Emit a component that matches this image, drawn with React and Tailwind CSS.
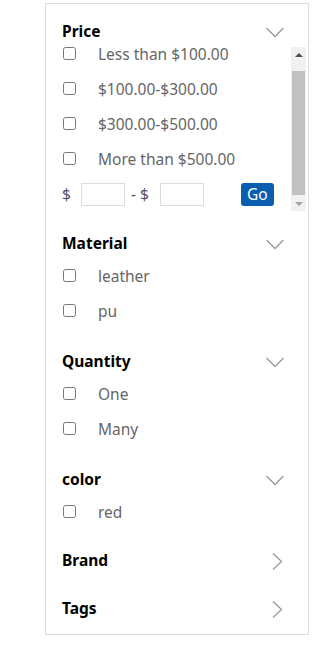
import React from "react"

function ChevronDown() {
  return (
    <svg width="18" height="11" viewBox="0 0 18 11" fill="none">
      <polyline points="0.5,1 9,9.5 17.5,1" stroke="#9a9a9a" strokeWidth="1.3" />
    </svg>
  )
}

function ChevronRight() {
  return (
    <svg width="11" height="17" viewBox="0 0 11 17" fill="none">
      <polyline points="1,0.5 9.5,8.5 1,16.5" stroke="#9a9a9a" strokeWidth="1.3" />
    </svg>
  )
}

function Option({ label }) {
  return (
    <label className="flex h-[35px] items-center pl-[17px]">
      <input type="checkbox" className="m-0 mb-[3px] h-[13px] w-[13px]" />
      <span className="ml-[22px] text-[15.5px] text-[#666]">{label}</span>
    </label>
  )
}

function Header({ title, open = true }) {
  return (
    <div className="flex h-[30px] items-center justify-between pl-4 pr-[24px]">
      <span className="text-[15.5px] font-bold text-black">{title}</span>
      {open ? <ChevronDown /> : <span className="mr-[1px]"><ChevronRight /></span>}
    </div>
  )
}

export default function App() {
  const prices = ["Less than $100.00", "$100.00-$300.00", "$300.00-$500.00", "More than $500.00"]

  return (
    <div className="min-h-screen bg-white" style={{ fontFamily: '"Noto Sans", "Open Sans", sans-serif' }}>
      <div className="ml-[45px] mt-[3px] h-[632px] w-[264px] border border-[#dcdcdc] pt-[13px]">
        {/* Price */}
        <Header title="Price" />
        <div className="flex h-[164px]">
          <div className="flex-1 overflow-hidden">
            <div className="mt-[-10px]">
              {prices.map((p) => (
                <Option key={p} label={p} />
              ))}
              <div className="flex h-[35px] items-center pl-4 text-[15.5px] text-[#5a4d66]">
                <span>$</span>
                <input className="ml-[10px] h-[23px] w-[44px] border border-[#ddd]" />
                <span className="ml-[6px]">- $</span>
                <input className="ml-[11px] h-[23px] w-[44px] border border-[#ddd]" />
                <button className="ml-[37px] h-[23px] w-[33px] rounded-[3px] bg-[#0a5eb0] text-[15.5px] leading-none text-white">
                  Go
                </button>
              </div>
            </div>
          </div>
          <div className="mr-[2px] flex w-[15px] flex-col bg-[#f1f1f1]">
            <div className="flex h-[15px] items-center justify-center">
              <div className="h-0 w-0 border-x-[4px] border-b-[4px] border-x-transparent border-b-[#505050]" />
            </div>
            <div className="flex-1 pt-[9px] pb-[1px] px-[1px]">
              <div className="h-full bg-[#c1c1c1]" />
            </div>
            <div className="flex h-[15px] items-center justify-center">
              <div className="h-0 w-0 border-x-[4px] border-t-[4px] border-x-transparent border-t-[#a3a3a3]" />
            </div>
          </div>
        </div>

        {/* Material */}
        <div className="mt-[18px]">
          <Header title="Material" />
          <Option label="leather" />
          <Option label="pu" />
        </div>

        {/* Quantity */}
        <div className="mt-[18px]">
          <Header title="Quantity" />
          <Option label="One" />
          <Option label="Many" />
        </div>

        {/* color */}
        <div className="mt-[18px]">
          <Header title="color" />
          <Option label="red" />
        </div>

        <div className="mt-[16px]">
          <Header title="Brand" open={false} />
        </div>
        <div className="mt-[18px]">
          <Header title="Tags" open={false} />
        </div>
      </div>
    </div>
  )
}
